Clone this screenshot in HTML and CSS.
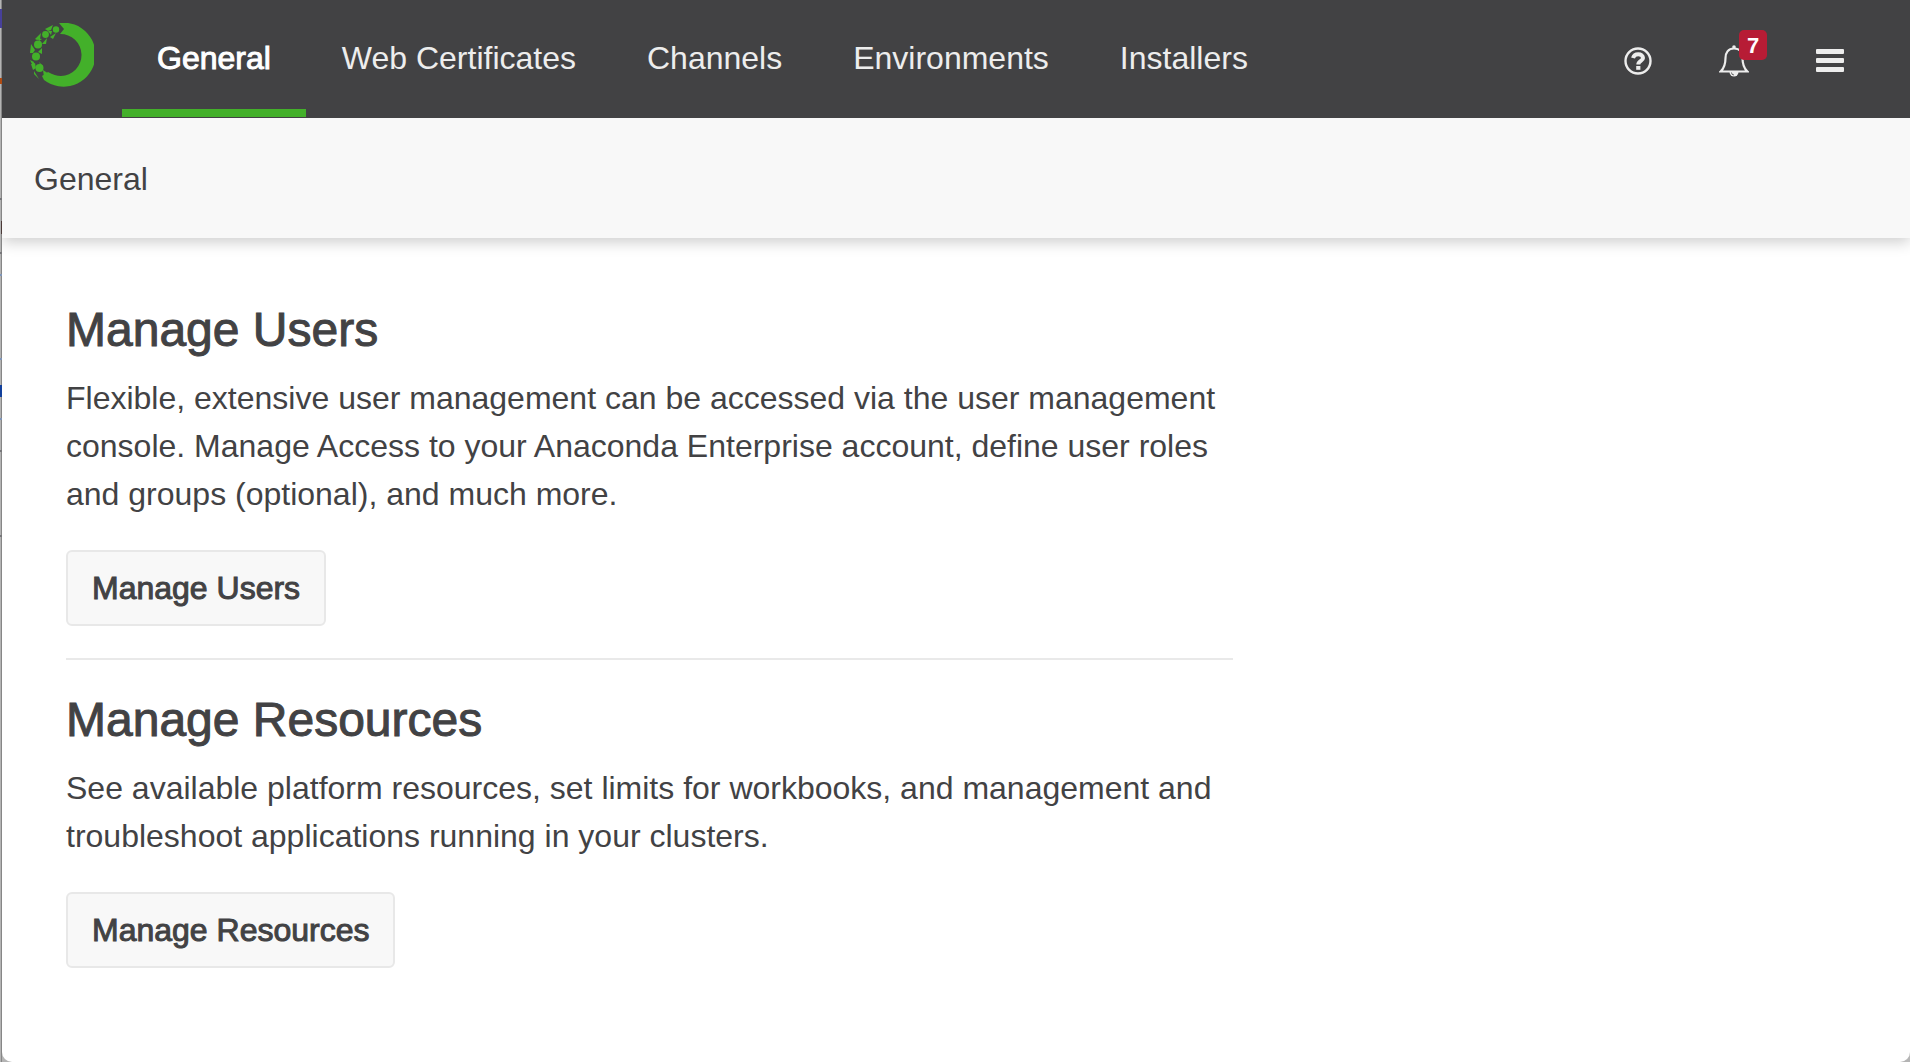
FILE: index.html
```
<!DOCTYPE html>
<html lang="en">
<head>
<meta charset="utf-8">
<title>General</title>
<link rel="stylesheet" href="styles.css">
</head>
<body>
<div class="window">
  <header class="topbar">
    <a class="logo" href="#" aria-label="Home">
      <svg width="64" height="64" viewBox="0 0 64 64" aria-hidden="true">
        <path d="M29 0 A32 32 0 1 1 14 57 L12 53 L18 49 Q25 53 31 53 A21 21 0 1 0 30 11 L34 6 Z" fill="#43b02a"/>
        <g fill="#43b02a">
          <circle cx="26" cy="6.500" r="3.200"/><circle cx="15.500" cy="11.500" r="3.400"/><circle cx="8" cy="21.500" r="4"/><circle cx="6" cy="33.500" r="4"/><circle cx="9.500" cy="45" r="4"/>
          <path d="M15 6l8-4-2 5-3 1zM5 16l6-6-1 6-3 1zM0 30l1-9 4 6-2 3zM0 37l4 2-1 4zM20 14l6-4-3 6zM12 21l5-6-1 6zM8 29l4-4 0 6zM9 39l4 4-1 3zM4 48l5 8-5-5zM13 47l6 4-5 3zM18 8l4 0-1 4zM8 15l4 1-3 2zM1 41l4-1 1 5-3 2z"/>
        </g>
      </svg>
    </a>
    <nav class="tabs">
      <a class="tab tab-active" href="#" aria-current="page">General</a>
      <a class="tab" href="#">Web Certificates</a>
      <a class="tab" href="#">Channels</a>
      <a class="tab" href="#">Environments</a>
      <a class="tab" href="#">Installers</a>
    </nav>
    <div class="actions">
      <button class="icon-button" type="button" aria-label="Help">
        <svg width="28" height="28" viewBox="0 0 28 28" aria-hidden="true">
          <circle cx="14" cy="14" r="12.500" fill="none" stroke="#ededed" stroke-width="2.400"/>
          <path d="M9 11C9.800 8.400 11.600 7.200 14.200 7.200C17 7.200 19 8.700 19 11C19 14 14.300 13.800 14.300 17.500" fill="none" stroke="#ededed" stroke-width="4"/>
          <path d="M12.200 19h4.200v3.800h-4.200z" fill="#ededed"/>
        </svg>
      </button>
      <button class="icon-button" type="button" aria-label="Notifications, 7 new">
        <svg width="30" height="32" viewBox="0 0 30 32" aria-hidden="true">
          <path d="M15 3.500C9 3.500 6.500 8 6.500 13C6.500 19 5.500 23 1.600 26.500H28.400C24.500 23 23.500 19 23.500 13C23.500 8 21 3.500 15 3.500Z" fill="none" stroke="#ededed" stroke-width="2.200"/>
          <circle cx="15" cy="2" r="1.800" fill="#ededed"/>
          <path d="M10.500 27h9a4.500 4.500 0 0 1-9 0z" fill="#ededed"/>
          <path d="M12.500 27.500a2.500 2.500 0 0 0 2.500 2.500" fill="none" stroke="#424244" stroke-width=".8"/>
        </svg>
        <span class="badge">7</span>
      </button>
      <button class="icon-button" type="button" aria-label="Menu">
        <svg width="28" height="24" viewBox="0 0 28 24" fill="#ededed" aria-hidden="true">
          <rect y="0" width="28" height="5" rx="1"/><rect y="9" width="28" height="5" rx="1"/><rect y="18" width="28" height="5" rx="1"/>
        </svg>
      </button>
    </div>
  </header>
  <div class="subheader"><h1 class="page-title">General</h1></div>
  <main class="content">
    <section class="section">
      <h2 class="heading">Manage Users</h2>
      <p class="text">Flexible, extensive user management can be accessed via the user management console. Manage Access to your Anaconda Enterprise account, define user roles and groups (optional), and much more.</p>
      <button class="button" type="button">Manage Users</button>
    </section>
    <section class="section">
      <h2 class="heading">Manage Resources</h2>
      <p class="text">See available platform resources, set limits for workbooks, and management and troubleshoot applications running in your clusters.</p>
      <button class="button" type="button">Manage Resources</button>
    </section>
  </main>
</div>
</body>
</html>
```
FILE: styles.css
```
* {
  box-sizing: border-box;
}

body {
  margin: 0;
  padding-left: 2px;
  min-height: 100vh;
  display: flex;
  color: #424244;
  font: 32px/48px "Liberation Sans", Arial, sans-serif;
  background:
    linear-gradient(#868686, #868686) 1px 0 / 1px 100% no-repeat,
    #b4b4b4;
}

/* Slivers of the desktop showing beside the window */
body::before {
  content: "";
  position: absolute;
  left: 0;
  top: 0;
  width: 2px;
  height: 100%;
  background:
    linear-gradient(#47409a, #47409a) 0 9px / 2px 19px no-repeat,
    linear-gradient(#b04a12, #b04a12) 0 78px / 2px 6px no-repeat,
    linear-gradient(#77777a, #77777a) 0 198px / 2px 2px no-repeat,
    linear-gradient(#4b3a38, #4b3a38) 1px 221px / 1px 13px no-repeat,
    linear-gradient(#77777a, #77777a) 0 252px / 2px 2px no-repeat,
    linear-gradient(#7f95b8, #7f95b8) 0 274px / 2px 2px no-repeat,
    linear-gradient(#7f95b8, #7f95b8) 0 358px / 2px 2px no-repeat,
    linear-gradient(#12409c, #12409c) 0 385px / 2px 12px no-repeat,
    linear-gradient(#7f95b8, #7f95b8) 0 418px / 2px 2px no-repeat,
    linear-gradient(#77777a, #77777a) 0 450px / 2px 2px no-repeat,
    linear-gradient(#77777a, #77777a) 0 535px / 2px 2px no-repeat;
}

.window {
  flex: 1;
  min-width: 0;
  background: #fff;
  border-radius: 0 0 10px 10px;
}

.topbar {
  display: flex;
  height: 118px;
  padding: 0 66px 0 28px;
  background: #424244;
}

.logo {
  display: flex;
  width: 92px;
  padding-top: 23px;
}

.tabs {
  display: flex;
  gap: 1px;
}

.tab {
  height: 117px;
  padding: 34px 35px 0;
  border-bottom: 8px solid transparent;
  color: #ededed;
  text-decoration: none;
  white-space: nowrap;
}

.tab-active {
  color: #fff;
  border-bottom-color: #43b02a;
  -webkit-text-stroke: 1px #fff;
}

.actions {
  display: flex;
  align-items: center;
  gap: 67px;
  height: 121px;
  margin-left: auto;
}

.icon-button {
  position: relative;
  display: flex;
  padding: 0;
  border: 0;
  background: none;
}

.badge {
  position: absolute;
  left: 20px;
  top: -15px;
  width: 28px;
  height: 30px;
  border-radius: 5px;
  background: #b71c35;
  color: #fff;
  font: bold 22px/32px "Liberation Sans", Arial, sans-serif;
  text-align: center;
}

.subheader {
  height: 120px;
  padding: 37px 32px 0;
  background: #f8f8f8;
  box-shadow: 0 4px 14px rgba(0, 0, 0, 0.2);
  clip-path: inset(0 0 -24px 0);
}

.page-title {
  margin: 0;
  font: inherit;
}

.content {
  max-width: 1295px;
  padding: 64px 64px 0;
}

.section + .section {
  margin-top: 32px;
  padding-top: 32px;
  border-top: 2px solid #e9e9e9;
}

.heading {
  margin: 0 0 16px;
  font-size: 48px;
  line-height: 56px;
  font-weight: normal;
  -webkit-text-stroke: 1px currentColor;
}

.text {
  margin: 0 0 32px;
}

.button {
  height: 76px;
  padding: 0 24px;
  border: 2px solid #e8e8e8;
  border-radius: 6px;
  background: #f8f8f8;
  color: inherit;
  font: inherit;
  -webkit-text-stroke: 1px currentColor;
}
```
